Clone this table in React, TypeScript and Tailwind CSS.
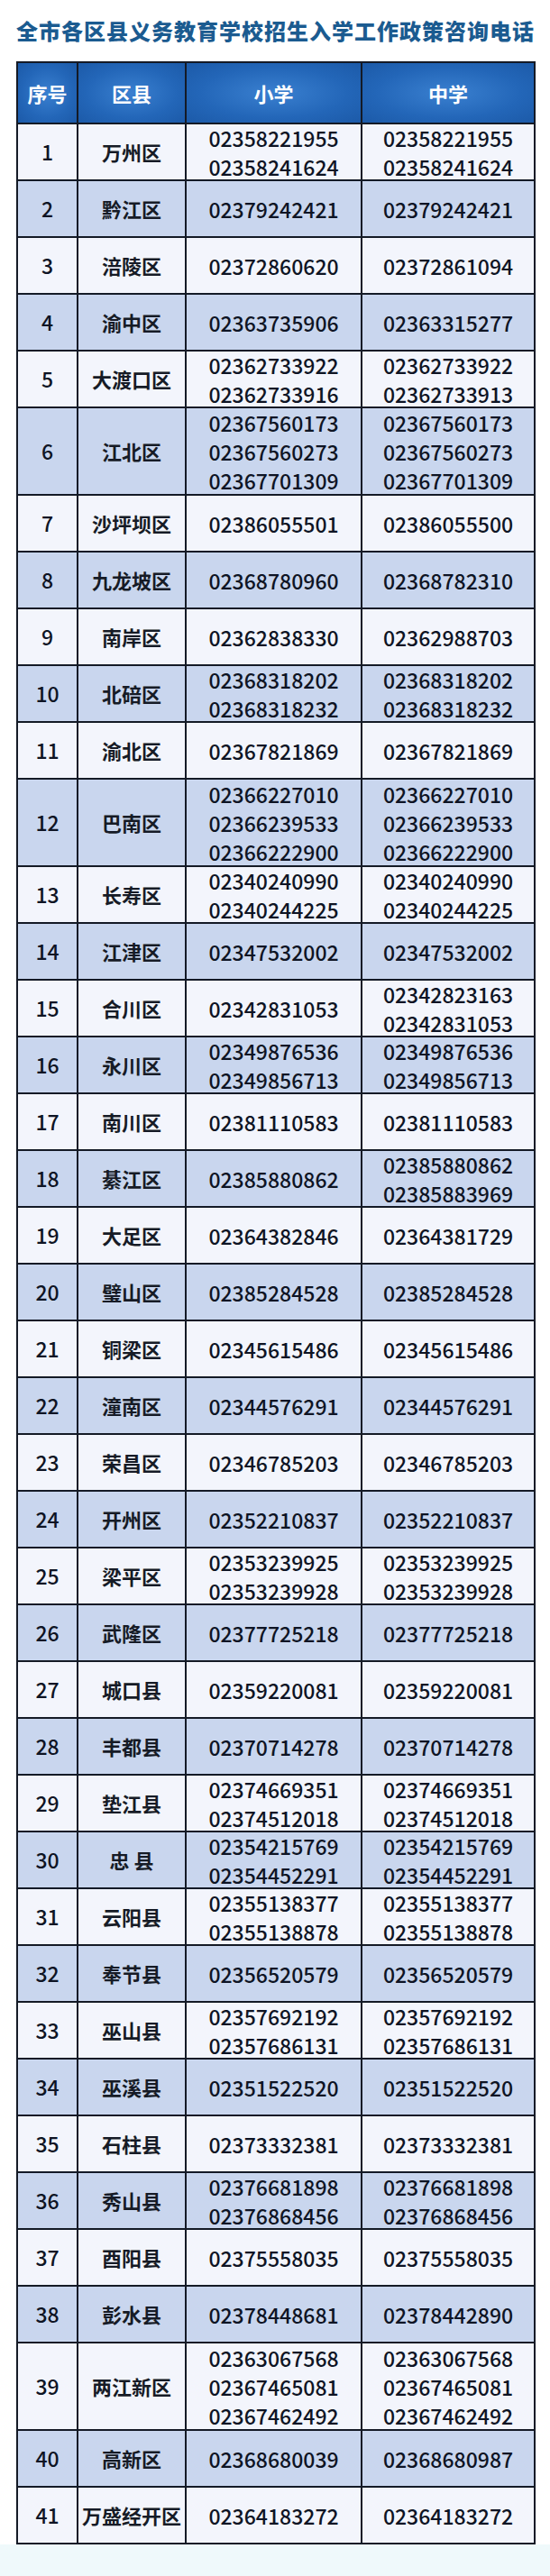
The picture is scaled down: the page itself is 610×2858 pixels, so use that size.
const rows: [number, string, string[], string[]][] = [
  [1, '万州区', ['02358221955', '02358241624'], ['02358221955', '02358241624']],
  [2, '黔江区', ['02379242421'], ['02379242421']],
  [3, '涪陵区', ['02372860620'], ['02372861094']],
  [4, '渝中区', ['02363735906'], ['02363315277']],
  [5, '大渡口区', ['02362733922', '02362733916'], ['02362733922', '02362733913']],
  [6, '江北区', ['02367560173', '02367560273', '02367701309'], ['02367560173', '02367560273', '02367701309']],
  [7, '沙坪坝区', ['02386055501'], ['02386055500']],
  [8, '九龙坡区', ['02368780960'], ['02368782310']],
  [9, '南岸区', ['02362838330'], ['02362988703']],
  [10, '北碚区', ['02368318202', '02368318232'], ['02368318202', '02368318232']],
  [11, '渝北区', ['02367821869'], ['02367821869']],
  [12, '巴南区', ['02366227010', '02366239533', '02366222900'], ['02366227010', '02366239533', '02366222900']],
  [13, '长寿区', ['02340240990', '02340244225'], ['02340240990', '02340244225']],
  [14, '江津区', ['02347532002'], ['02347532002']],
  [15, '合川区', ['02342831053'], ['02342823163', '02342831053']],
  [16, '永川区', ['02349876536', '02349856713'], ['02349876536', '02349856713']],
  [17, '南川区', ['02381110583'], ['02381110583']],
  [18, '綦江区', ['02385880862'], ['02385880862', '02385883969']],
  [19, '大足区', ['02364382846'], ['02364381729']],
  [20, '璧山区', ['02385284528'], ['02385284528']],
  [21, '铜梁区', ['02345615486'], ['02345615486']],
  [22, '潼南区', ['02344576291'], ['02344576291']],
  [23, '荣昌区', ['02346785203'], ['02346785203']],
  [24, '开州区', ['02352210837'], ['02352210837']],
  [25, '梁平区', ['02353239925', '02353239928'], ['02353239925', '02353239928']],
  [26, '武隆区', ['02377725218'], ['02377725218']],
  [27, '城口县', ['02359220081'], ['02359220081']],
  [28, '丰都县', ['02370714278'], ['02370714278']],
  [29, '垫江县', ['02374669351', '02374512018'], ['02374669351', '02374512018']],
  [30, '忠 县', ['02354215769', '02354452291'], ['02354215769', '02354452291']],
  [31, '云阳县', ['02355138377', '02355138878'], ['02355138377', '02355138878']],
  [32, '奉节县', ['02356520579'], ['02356520579']],
  [33, '巫山县', ['02357692192', '02357686131'], ['02357692192', '02357686131']],
  [34, '巫溪县', ['02351522520'], ['02351522520']],
  [35, '石柱县', ['02373332381'], ['02373332381']],
  [36, '秀山县', ['02376681898', '02376868456'], ['02376681898', '02376868456']],
  [37, '酉阳县', ['02375558035'], ['02375558035']],
  [38, '彭水县', ['02378448681'], ['02378442890']],
  [39, '两江新区', ['02363067568', '02367465081', '02367462492'], ['02363067568', '02367465081', '02367462492']],
  [40, '高新区', ['02368680039'], ['02368680987']],
  [41, '万盛经开区', ['02364183272'], ['02364183272']],
];

function Phones({ list }: { list: string[] }) {
  return (
    <div className="flex flex-col items-center justify-center text-[23px] leading-[32px] font-medium text-[#0e1424]">
      {list.map((p, i) => (
        <span key={i}>{p}</span>
      ))}
    </div>
  );
}

export default function App() {
  return (
    <div
      className="w-[610px] h-[2858px] bg-white flex flex-col"
      style={{ fontFamily: '"Noto Sans CJK SC", "Noto Sans", sans-serif' }}
    >
      <div className="h-[68px] flex items-center justify-center pl-[1px]">
        <h1 className="text-[24px] font-black tracking-[1px] whitespace-nowrap text-[#1b5b90] leading-none">
          全市各区县义务教育学校招生入学工作政策咨询电话
        </h1>
      </div>

      <div className="mx-[18px] w-[576px] bg-[#141a26] p-[2px] grid grid-cols-[65px_118px_193px_190px] gap-[2px]">
        {['序号', '区县', '小学', '中学'].map((h) => (
          <div
            key={h}
            className="h-[66px] flex items-center justify-center bg-[radial-gradient(ellipse_at_center,#3a80d0_0%,#2366b8_60%,#1c5aa8_100%)] text-white text-[22px] font-bold"
          >
            {h}
          </div>
        ))}

        {rows.map(([n, name, primary, middle]) => {
          const tall = primary.length > 2 || middle.length > 2;
          const bg = n % 2 === 0 ? 'bg-[#c9d6ee]' : 'bg-[#f3f5fc]';
          const h = tall ? 'h-[95px]' : 'h-[61px]';
          return [
            <div key={n + 'a'} className={`${bg} ${h} flex items-center justify-center text-[23px] font-medium text-[#0e1424]`}>
              {n}
            </div>,
            <div key={n + 'b'} className={`${bg} ${h} flex items-center justify-center text-[22px] font-bold text-[#161b26] whitespace-pre`}>
              {name}
            </div>,
            <div key={n + 'c'} className={`${bg} ${h} flex items-center justify-center overflow-visible`}>
              <Phones list={primary} />
            </div>,
            <div key={n + 'd'} className={`${bg} ${h} flex items-center justify-center overflow-visible`}>
              <Phones list={middle} />
            </div>,
          ];
        })}
      </div>

      <div className="flex-1 bg-[#eff9fb]" />
    </div>
  );
}
